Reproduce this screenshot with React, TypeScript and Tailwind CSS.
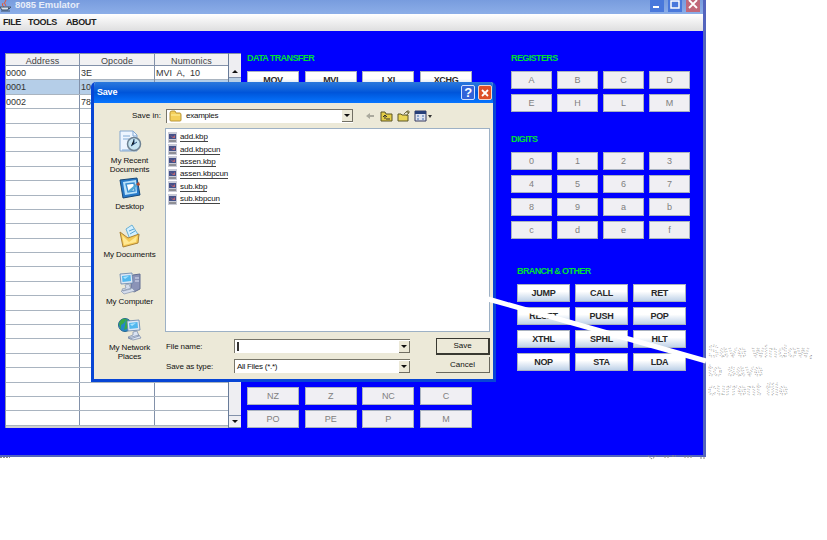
import React from "react";

const registers = ["A", "B", "C", "D", "E", "H", "L", "M"];
const digits = ["0", "1", "2", "3", "4", "5", "6", "7", "8", "9", "a", "b", "c", "d", "e", "f"];
const branches = ["JUMP", "CALL", "RET", "RESET", "PUSH", "POP", "XTHL", "SPHL", "HLT", "NOP", "STA", "LDA"];
const files = ["add.kbp", "add.kbpcun", "assen.kbp", "assen.kbpcun", "sub.kbp", "sub.kbpcun"];
const rows = [["0000", "3E", "MVI  A,  10"], ["0001", "10", ""], ["0002", "78", ""]];

function Key({ label, active = false }: { label: string; active?: boolean }) {
  return (
    <button className={`flex h-[18px] items-center justify-center border border-[#a9b2c0] text-[9px] leading-none ${active ? "bg-linear-to-b from-white from-40% to-[#bfd2e8] font-bold tracking-[-0.3px] text-[#292929]" : "bg-[#f0eff3] text-[#808080]"}`}>
      {label}
    </button>
  );
}

function Heading({ children }: { children: React.ReactNode }) {
  return <h2 className="h-[18px] text-[9px] leading-[10px] font-bold tracking-[-0.6px] whitespace-nowrap text-[#00e033]">{children}</h2>;
}

function Arrow({ up = false }: { up?: boolean }) {
  return <svg className="h-[3px] w-[6px]" viewBox="0 0 6 3"><path d={up ? "M0 3h6L3 0z" : "M0 0h6L3 3z"} fill="#111" /></svg>;
}

function ProgramTable() {
  return (
    <div className="flex h-[375px] w-[236px] bg-white">
      <div className="w-[223px] border-l border-[#8b96aa]">
        <div className="grid h-[13px] grid-cols-[74px_75px_73px] border-t border-b border-[#8291aa] bg-[#f1f1f3] text-center text-[9px] leading-[14px] tracking-[0.1px] text-[#444]">
          <span className="border-r border-[#8291aa]">Address</span><span className="border-r border-[#8291aa]">Opcode</span><span>Numonics</span>
        </div>
        {Array.from({ length: 25 }, (_, i) => (
          <div key={i} className={`grid h-[14.4px] grid-cols-[74px_75px_73px] border-b border-[#a9b4c0] text-[9px] leading-[14px] whitespace-pre text-[#333] ${i === 1 ? "bg-[#b5cee8]" : ""}`}>
            {[0, 1, 2].map((n) => <span key={n} className={`${n < 2 ? "border-r border-[#8291aa]" : ""} ${n === 0 ? "" : "pl-px"}`}>{rows[i]?.[n]}</span>)}
          </div>
        ))}
        <div className="h-[2px] bg-[#cfcfcf]" />
      </div>
      <div className="flex w-[13px] flex-col border-l border-[#687b99] bg-[#eeeef2]">
        <div className="h-[13px] border-t border-[#8291aa]" />
        <div className="flex h-[12px] items-center justify-center border-b border-[#8291aa]"><Arrow up /></div>
        <div className="h-[12px] bg-[#b8cfe5]" />
        <div className="flex-1" />
        <div className="flex h-[13px] items-center justify-center border-y border-[#8291aa]"><Arrow /></div>
      </div>
    </div>
  );
}

function Screen({ x, y }: { x: number; y: number }) {
  return <g transform={`translate(${x} ${y})`}><path d="M0 1 12 0 13 10 1 11z" fill="#dce7f5" stroke="#6281aa" strokeWidth=".8" /><path d="M2 3 10.5 2 11 8 2.5 9z" fill="#52b7ee" /><path d="M3 4 9 3 5 6z" fill="#a9e4ff" /></g>;
}

function PlaceIcon({ kind }: { kind: string }) {
  return (
    <svg className="h-[24px] w-[24px]" viewBox="0 0 24 24">
      {kind === "recent" && <><path d="M2 1h13l4 4v16H2z" fill="#edf5ff" stroke="#84a7cf" /><path d="M15 1v5h4M5 6h7M5 9h6M4 20h11" fill="none" stroke="#81aad5" /><circle cx="16" cy="14" r="6.5" fill="#c7e5f2" stroke="#6e8293" strokeWidth="1.5" /><path d="M16 9v5l-3 2M16 14l3-2" stroke="#254c78" /></>}
      {kind === "desktop" && <><path d="m2 4 17-2 3 17-17 3z" fill="#2779c8" stroke="#184978" /><path d="m5 6 13-2 1 13-12 2z" fill="#b8e1fa" /><path d="m8 8 8-1 1 8-7 1z" fill="#fff" stroke="#378bd0" strokeWidth="1.4" /><path d="m11 14 8-7 2 1-7 7-4 1z" fill="#53a8d3" /><path d="m18 8 3-2 1 3-2 1z" fill="#ad4b31" /></>}
      {kind === "documents" && <><path d="m8 5 6-4 7 11-8 6z" fill="#d2efff" stroke="#6bb1d5" /><path d="m11 7 5-2M12 10l5-3" stroke="#59a5d3" /><path d="m2 8 8 6 11-4-1 9-15 4z" fill="#f5ca56" stroke="#aa8238" /><path d="m4 11 7 7 8-6-1 6-12 3z" fill="#ffe892" /></>}
      {kind === "computer" && <><path d="m15 4 7-1v15l-6 3-3-2V6z" fill="#8b93b7" stroke="#626e92" /><path d="M17 7h4M17 10h4" stroke="#dce2f4" /><Screen x={2} y={2} /><path d="m7 14 4-1 2 5-8 2-1-2 4-1zM3 20l11-3 3 3-11 3z" fill="#d5ddec" stroke="#8593ad" strokeWidth=".7" /></>}
      {kind === "network" && <><circle cx="7" cy="8" r="6.5" fill="#2587c7" stroke="#286890" /><path d="M1 7c1-5 5-6 7-5L6 6 3 8v5zM8 2l5 4-3 5-4 2 1-4z" fill="#39a947" /><Screen x={9} y={3} /><path d="m15 15 4-1 2 5-9 3-2-2 5-2zM10 21l11-3 2 3-8 2z" fill="#dbe4f3" stroke="#7686a5" strokeWidth=".7" /></>}
    </svg>
  );
}

function Place({ kind, label, className }: { kind: string; label: string; className: string }) {
  return <div className={`flex flex-col items-center text-center text-[8px] leading-[9px] tracking-[-0.1px] whitespace-pre-line text-[#111] ${className}`}><PlaceIcon kind={kind} /><span className="mt-[2px]">{label}</span></div>;
}

function Dropdown({ children, className = "" }: { children?: React.ReactNode; className?: string }) {
  return <div className={`flex h-[14px] items-center border-t border-l border-[#777569] bg-white pl-[2px] text-[8px] tracking-[-0.25px] text-[#111] ${className}`}>{children}<div className="ml-auto flex h-[12px] w-[11px] items-center justify-center border-r border-b border-[#716f64] bg-[#ece9d8]"><Arrow /></div></div>;
}

function ToolbarIcons() {
  return (
    <svg className="ml-[13px] h-[14px] w-[68px]" viewBox="0 0 68 14">
      <path d="m0 7 4-3v2h4v2H4v2z" fill="#aaa99d" />
      <path d="M15 3h4l1 2h6v7H15z" fill="#e4ce49" stroke="#5a5524" /><path d="M19 10V7m-2 1 2-2 2 2M20 10h4" fill="none" stroke="#333" />
      <path d="M32 5h3l1 1h6v6H32z" fill="#e9d557" stroke="#5b5728" /><path d="m38 5 3-3 2 2-3 3M42 1v4M40 3h4" fill="none" stroke="#777244" />
      <path d="M49 2h11v10H49z" fill="#dfe4f1" stroke="#343b61" /><path d="M49 2h11v3H49z" fill="#263f79" /><path d="M51 7h2M56 7h2M51 10h2M56 10h2" stroke="#416dad" /><path d="M62 6h4l-2 3z" fill="#333" />
    </svg>
  );
}

function SaveDialog() {
  return (
    <section className="absolute top-[82px] left-[91px] flex h-[300px] w-[405px] flex-col overflow-hidden rounded-t-[5px] border-x-[3px] border-b-[3px] border-[#0745d5] bg-[#ece9d8]">
      <header className="flex h-[21px] items-center bg-linear-to-b from-[#2a78dc] via-[#0055da] to-[#0875ff] pl-[3px] text-[9px] font-bold tracking-[-0.2px] text-white">
        <span>Save</span>
        <button className="ml-auto flex h-[15px] w-[14px] items-center justify-center rounded-[2px] border border-[#d0dfff] bg-[#3263d9] text-[13px] leading-none">?</button>
        <button className="mr-[1px] ml-[3px] flex h-[15px] w-[14px] items-center justify-center rounded-[2px] border border-[#f5d5cb] bg-[#dd5029]"><svg className="h-[8px] w-[8px]" viewBox="0 0 8 8"><path d="m1 1 6 6M7 1 1 7" stroke="white" strokeWidth="1.8" /></svg></button>
      </header>
      <div className="flex flex-1">
        <aside className="w-[71px]">
          <div className="h-[27px]" />
          <Place kind="recent" label={"My Recent\nDocuments"} className="h-[46px]" />
          <Place kind="desktop" label="Desktop" className="h-[48px]" />
          <Place kind="documents" label="My Documents" className="h-[47px]" />
          <Place kind="computer" label="My Computer" className="h-[46px]" />
          <Place kind="network" label={"My Network\nPlaces"} className="h-[48px]" />
        </aside>
        <main className="w-[327px]">
          <div className="flex h-[25px] items-center">
            <span className="-ml-[33px] w-[34px] text-[8px] whitespace-nowrap text-[#111]">Save in:</span>
            <Dropdown className="w-[187px]"><svg className="mr-[4px] h-[12px] w-[13px]" viewBox="0 0 13 12"><path d="M1 3q0-2 2-2h3l1 2h4q1 0 1 2v5q0 1-1 1H2q-1 0-1-1z" fill="#f4cf5a" stroke="#b99638" /><path d="M2 5h9" stroke="#fff0a0" /></svg>examples</Dropdown>
            <ToolbarIcons />
          </div>
          <div className="h-[204px] w-[325px] border border-[#9db1c5] bg-white pt-[2px] pl-[2px]">
            {files.map((file) => <div key={file} className="flex h-[12.4px] items-center text-[8px] leading-[9px] tracking-[-0.1px] text-[#111]"><svg className="mr-[3px] h-[11px] w-[9px]" viewBox="0 0 9 11"><path d="M0 0h9v11H0z" fill="#c9cbd7" /><path d="M1 2h7v5H1z" fill="#445189" /><path d="m2 3 3 2 2-2v3H5z" fill="#ba6371" /><path d="M1 9h7" stroke="#555" /></svg><span className="border-b border-[#444]">{file}</span></div>)}
          </div>
          <div className="mt-[5px] flex">
            <div className="w-[69px] pl-px text-[8px] leading-[19.5px] tracking-[-0.1px] text-[#111]"><p>File name:</p><p>Save as type:</p></div>
            <div className="mt-[2px] flex flex-col gap-[6px]"><Dropdown className="w-[176px]"><span className="h-[9px] w-[2px] bg-[#333]" /></Dropdown><Dropdown className="w-[176px]">All Files (*.*)</Dropdown></div>
            <div className="mt-px ml-[26px] flex w-[54px] flex-col gap-[2px] text-[8px] text-[#111]"><button className="h-[17px] border border-r-2 border-b-2 border-[#393931] bg-[#ece9d8]">Save</button><button className="h-[16px] border-r border-b border-[#69685d] bg-[#ece9d8]">Cancel</button></div>
          </div>
        </main>
      </div>
    </section>
  );
}

function Emulator() {
  return (
    <div className="h-[457px] w-[706px] border-r-[3px] border-b-[2px] border-[#5364bd] bg-[#0000fe]">
      <header className="flex h-[14px] overflow-hidden bg-linear-to-b from-[#789cde] to-[#8caee8] text-[9.5px] leading-[10px] font-bold tracking-[-0.05px] text-[#e7edf9]">
        <svg className="mr-[4px] h-[12px] w-[11px]" viewBox="0 0 11 12"><path d="M3 3q-2 2 1 4M6 0Q3 3 6 6" fill="none" stroke="#e65835" /><path d="M0 7h9l-1 3H2zM9 7h2l-2 2M1 11h9" fill="#d9e4ef" stroke="#41546d" /></svg>
        8085 Emulator
        <div className="mr-[3px] ml-auto flex gap-[4px]">
          {["min", "max", "close"].map((kind) => <svg key={kind} className={`h-[12px] w-[14px] ${kind === "close" ? "bg-[#c16779]" : "bg-[#4978db]"}`} viewBox="0 0 14 12">{kind === "min" && <path d="M3 7h6" stroke="white" strokeWidth="2" />}{kind === "max" && <path d="M3 1h8v7H3z" fill="none" stroke="white" strokeWidth="1.5" />}{kind === "close" && <path d="m3 0 8 8M11 0 3 8" stroke="white" strokeWidth="1.8" />}</svg>)}
        </div>
      </header>
      <nav className="flex h-[17px] gap-[10px] bg-linear-to-b from-white to-[#dededf] pl-[3px] text-[9px] leading-[16px] font-bold tracking-[-0.4px] text-[#222]"><span className="w-[15px]">FILE</span><span className="w-[28px]">TOOLS</span><span>ABOUT</span></nav>
      <div className="flex pt-[22px] pl-[5px]">
        <ProgramTable />
        <div className="ml-[6px] w-[225px]">
          <Heading>DATA TRANSFER</Heading>
          <div className="grid grid-cols-[52px_52px_52px_52px] gap-x-[5.7px]">{["MOV", "MVI", "LXI", "XCHG"].map((s) => <Key key={s} label={s} active />)}</div>
          <div className="mt-[298px] grid grid-cols-[52px_52px_52px_52px] gap-x-[5.7px] gap-y-[5px]">{["NZ", "Z", "NC", "C", "PO", "PE", "P", "M"].map((s) => <Key key={s} label={s} />)}</div>
        </div>
        <div className="ml-[39px]">
          <Heading>REGISTERS</Heading>
          <div className="grid grid-cols-[41px_41px_41px_41px] gap-x-[5px] gap-y-[5px]">{registers.map((s) => <Key key={s} label={s} />)}</div>
          <div className="h-[22px]" /><Heading>DIGITS</Heading>
          <div className="grid grid-cols-[41px_41px_41px_41px] gap-x-[5px] gap-y-[5px]">{digits.map((s) => <Key key={s} label={s} />)}</div>
          <div className="mt-[27px] ml-[6px]"><Heading>BRANCH &amp; OTHER</Heading><div className="grid grid-cols-[53px_53px_53px] gap-x-[5px] gap-y-[5px]">{branches.map((s) => <Key key={s} label={s} active />)}</div></div>
        </div>
      </div>
    </div>
  );
}

export default function App() {
  return (
    <div className="relative h-[540px] w-[827px] overflow-hidden bg-white font-['Liberation_Sans',Arial,sans-serif]">
      <Emulator />
      <SaveDialog />
      <svg className="absolute inset-0 h-[540px] w-[827px]" viewBox="0 0 827 540">
        <path d="M488 299 706 361" stroke="white" strokeWidth="5" />
        <g fill="white" stroke="#777" strokeWidth=".5" strokeDasharray="1 1.5" fontSize="16">
          <text x="708" y="357" textLength="105">Save window,</text><text x="708" y="376" textLength="55">to save</text><text x="708" y="395" textLength="80">current file</text>
        </g>
        <path d="M0 457.5h10M648 456l4 3 4-3M664 457h5M672 456h4M684 457h8M700 458h6" fill="none" stroke="#888" strokeDasharray="2 1" />
      </svg>
    </div>
  );
}
